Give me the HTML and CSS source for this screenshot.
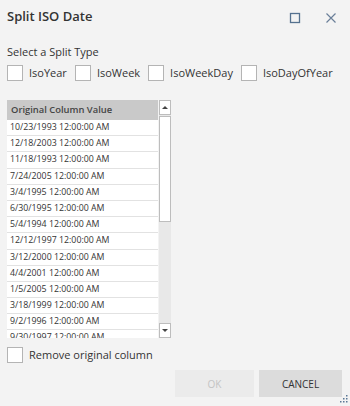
FILE: index.html
```html
<!DOCTYPE html>
<html lang="en">
<head>
    <meta charset="UTF-8">
    <meta name="viewport" content="width=device-width, initial-scale=1.0">
    <title>Split ISO Date</title>
    <link rel="stylesheet" href="styles.css">
</head>
<body>

<div class="dialog">
    <div class="title-bar">
        <h1>Split ISO Date</h1>
        <div class="window-buttons">
            <svg class="icon" width="12" height="12" viewBox="0 0 12 12">
                <rect x="1.5" y="1.5" width="9" height="9" fill="none" stroke="#55718f" stroke-width="1.3"/>
            </svg>
            <svg class="icon" width="12" height="12" viewBox="0 0 12 12">
                <path d="M1.5 1.5 L10.5 10.5 M10.5 1.5 L1.5 10.5" stroke="#6a7f99" stroke-width="1.2" fill="none"/>
            </svg>
        </div>
    </div>

    <div class="section-label">Select a Split Type</div>
    <div class="split-types">
        <label class="check"><span class="box"></span>IsoYear</label>
        <label class="check"><span class="box"></span>IsoWeek</label>
        <label class="check"><span class="box"></span>IsoWeekDay</label>
        <label class="check"><span class="box"></span>IsoDayOfYear</label>
    </div>

    <div class="grid">
        <div class="grid-table">
            <div class="grid-header">Original Column Value</div>
            <div class="grid-body">
                <div class="row">10/23/1993 12:00:00 AM</div>
                <div class="row">12/18/2003 12:00:00 AM</div>
                <div class="row">11/18/1993 12:00:00 AM</div>
                <div class="row">7/24/2005 12:00:00 AM</div>
                <div class="row">3/4/1995 12:00:00 AM</div>
                <div class="row">6/30/1995 12:00:00 AM</div>
                <div class="row">5/4/1994 12:00:00 AM</div>
                <div class="row">12/12/1997 12:00:00 AM</div>
                <div class="row">3/12/2000 12:00:00 AM</div>
                <div class="row">4/4/2001 12:00:00 AM</div>
                <div class="row">1/5/2005 12:00:00 AM</div>
                <div class="row">3/18/1999 12:00:00 AM</div>
                <div class="row">9/2/1996 12:00:00 AM</div>
                <div class="row">9/30/1997 12:00:00 AM</div>
            </div>
        </div>
        <div class="scrollbar">
            <div class="scroll-btn"><span class="arrow up"></span></div>
            <div class="thumb"></div>
            <div class="track"></div>
            <div class="scroll-btn"><span class="arrow down"></span></div>
        </div>
    </div>

    <label class="check remove"><span class="box"></span>Remove original column</label>

    <div class="buttons">
        <button class="ok" disabled>OK</button>
        <button class="cancel">CANCEL</button>
    </div>

    <svg class="grip" width="8" height="8" viewBox="0 0 8 8">
        <rect x="6" y="0" width="1.5" height="1.5" fill="#5b7896"/>
        <rect x="3" y="3" width="1.5" height="1.5" fill="#5b7896"/>
        <rect x="6" y="3" width="1.5" height="1.5" fill="#5b7896"/>
        <rect x="0" y="6" width="1.5" height="1.5" fill="#5b7896"/>
        <rect x="3" y="6" width="1.5" height="1.5" fill="#5b7896"/>
        <rect x="6" y="6" width="1.5" height="1.5" fill="#5b7896"/>
    </svg>
</div>

</body>
</html>
```

FILE: styles.css
```css
html, body {
    margin: 0;
    padding: 0;
}
body {
    font-family: "Open Sans", "Noto Sans", sans-serif;
    color: #333;
    background-color: #f3f3f3;
}
.dialog {
    position: relative;
    width: 350px;
    height: 406px;
    box-sizing: border-box;
    padding: 7px 8px 0 7px;
    background-color: #f3f3f3;
}
.title-bar {
    display: flex;
    justify-content: space-between;
    align-items: flex-start;
    height: 18px;
}
h1 {
    margin: 0;
    font-size: 13px;
    font-weight: 600;
    line-height: 18px;
    color: #333;
}
.window-buttons {
    display: flex;
    gap: 24px;
    margin-top: 5px;
    margin-right: 5px;
}
.icon {
    display: block;
}
.section-label {
    margin-top: 19px;
    font-size: 11px;
    line-height: 15px;
}
.split-types {
    display: flex;
    gap: 8px;
    margin-top: 6px;
}
.check {
    display: flex;
    align-items: center;
    gap: 6px;
    font-size: 11px;
    line-height: 16px;
    height: 16px;
}
.box {
    display: block;
    width: 14px;
    height: 14px;
    border: 1px solid #b4b4b4;
    background-color: #fff;
}
.grid {
    display: flex;
    gap: 1px;
    margin-top: 19px;
    height: 238px;
}
.grid-table {
    width: 151px;
    overflow: hidden;
    background-color: #fff;
}
.grid-header {
    height: 20px;
    line-height: 20px;
    padding-left: 4px;
    background-color: #c9c9c9;
    font-size: 9.4px;
    font-weight: 600;
    color: #444;
}
.row {
    height: 15.2px;
    line-height: 15.2px;
    padding-left: 3px;
    border-bottom: 1px solid #e2e2e2;
    font-size: 8.8px;
    color: #333;
}
.scrollbar {
    display: flex;
    flex-direction: column;
    width: 12px;
    background-color: #e8e8e8;
}
.scroll-btn {
    display: flex;
    align-items: center;
    justify-content: center;
    height: 13px;
    border: 1px solid #bdbdbd;
    box-sizing: content-box;
    width: 10px;
    background-color: #fff;
}
.thumb {
    height: 104px;
    margin-top: 1px;
    border: 1px solid #bdbdbd;
    background-color: #fff;
}
.track {
    flex: 1;
}
.arrow {
    width: 0;
    height: 0;
    border-left: 3px solid transparent;
    border-right: 3px solid transparent;
}
.arrow.up {
    border-bottom: 3px solid #444;
}
.arrow.down {
    border-top: 3px solid #444;
}
.remove {
    margin-top: 9px;
}
.buttons {
    display: flex;
    justify-content: flex-end;
    gap: 5px;
    margin-top: 7px;
}
button {
    width: 79px;
    height: 27px;
    border: none;
    font-family: "Open Sans", "Noto Sans", sans-serif;
    font-size: 10px;
    padding: 0;
}
button.ok {
    background-color: #ebebeb;
    color: #c3c3c3;
}
button.cancel {
    width: 83px;
    background-color: #dcdcdc;
    color: #333;
}
.grip {
    position: absolute;
    right: 2px;
    bottom: 3px;
}
```
